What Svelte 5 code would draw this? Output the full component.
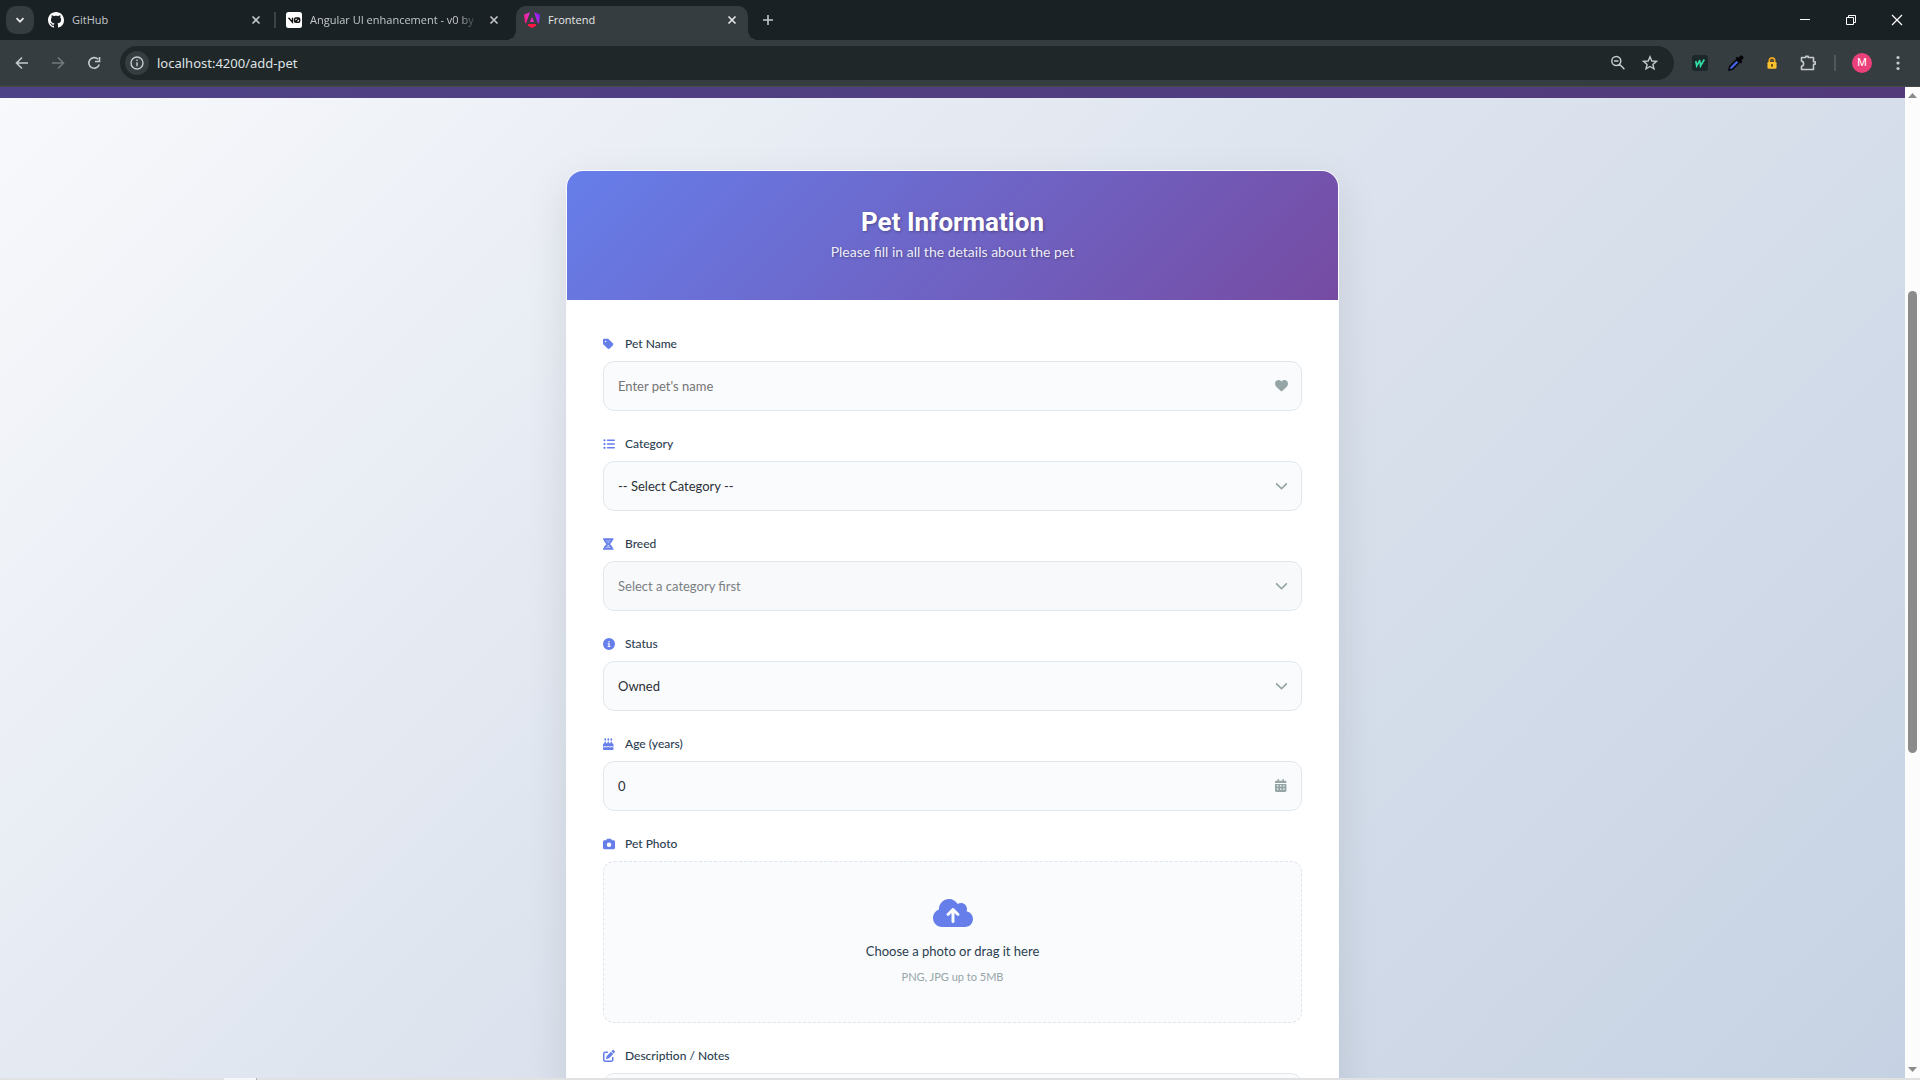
<script>
  let name = $state('');
  let category = $state('');
  let status = $state('owned');
  let age = $state(0);

  const icons = {
    tag: 'M0 80V229.5c0 17 6.700 33.300 18.700 45.300l176 176c25 25 65.500 25 90.500 0L418.700 317.300c25-25 25-65.500 0-90.500l-176-176c-12-12-28.300-18.700-45.300-18.700H48C21.500 32 0 53.500 0 80zm112 32a32 32 0 1 1 0 64 32 32 0 1 1 0-64z',
    list: 'M64 144a48 48 0 1 0 0-96 48 48 0 1 0 0 96zM192 64c-17.700 0-32 14.300-32 32s14.300 32 32 32H480c17.700 0 32-14.300 32-32s-14.300-32-32-32H192zm0 160c-17.700 0-32 14.300-32 32s14.300 32 32 32H480c17.700 0 32-14.300 32-32s-14.300-32-32-32H192zm0 160c-17.700 0-32 14.300-32 32s14.300 32 32 32H480c17.700 0 32-14.300 32-32s-14.300-32-32-32H192zM64 464a48 48 0 1 0 0-96 48 48 0 1 0 0 96zm48-208a48 48 0 1 0-96 0 48 48 0 1 0 96 0z',
    breed: 'M0 8h448v52h-24c-16 82-66 146-132 196 66 50 116 114 132 196h24v52H0v-52h24c16-82 66-146 132-196C90 206 40 142 24 60H0zM108 116l16 20h200l16-20zm68 72l48 36 48-36zm48 112l-72 48h144zM124 396l-16 20h232l-16-20z',
    info: 'M256 512A256 256 0 1 0 256 0a256 256 0 1 0 0 512zM216 336h24V272H216c-13.300 0-24-10.700-24-24s10.700-24 24-24h48c13.300 0 24 10.700 24 24v88h8c13.300 0 24 10.700 24 24s-10.700 24-24 24H216c-13.300 0-24-10.700-24-24s10.700-24 24-24zm40-208a32 32 0 1 1 0 64 32 32 0 1 1 0-64z',
    cake: 'M86.400 5.500L61.800 47.600C58 54.100 56 61.600 56 69.200V72c0 22.100 17.900 40 40 40s40-17.900 40-40V69.200c0-7.600-2-15-5.800-21.600L105.600 5.500C103.600 2.100 100 0 96 0s-7.600 2.100-9.600 5.500zm128 0L189.800 47.600c-3.800 6.500-5.800 14-5.800 21.600V72c0 22.100 17.900 40 40 40s40-17.900 40-40V69.200c0-7.600-2-15-5.800-21.600L233.600 5.500C231.600 2.100 228 0 224 0s-7.600 2.100-9.600 5.500zM317.800 47.600c-3.800 6.500-5.800 14-5.800 21.600V72c0 22.100 17.900 40 40 40s40-17.900 40-40V69.200c0-7.600-2-15-5.800-21.600L361.600 5.500C359.600 2.100 356 0 352 0s-7.600 2.100-9.600 5.500L317.800 47.600zM128 176c0-17.700-14.300-32-32-32s-32 14.300-32 32v48c-35.300 0-64 28.700-64 64v71c8.300 5.200 18.100 9 28.800 9 13.500 0 27.200-6.100 38.400-13.400 5.400-3.500 9.900-7.100 13-9.700 5.300-4.600 12.100-4.600 21.600 0 3.300 2.700 7.700 6.300 13.100 9.800C126.200 362 139.600 368 153 368s26.800-6 38.100-13.400c5.400-3.500 9.800-7.100 13-9.800 12.100-10.300 27.800-10.300 39.800 0 3.100 2.700 7.500 6.300 13 9.800C268.200 362 281.600 368 295 368s26.800-6 38.100-13.400c5.400-3.500 9.800-7.100 13-9.800 9.500-4.600 16.300-4.600 21.600 0 3.100 2.700 7.600 6.200 13 9.700 11.200 7.400 24.900 13.500 38.400 13.500 10.700 0 20.500-3.800 28.900-9V288c0-35.300-28.700-64-64-64V176c0-17.700-14.300-32-32-32s-32 14.300-32 32v48H256V176c0-17.700-14.300-32-32-32s-32 14.300-32 32v48H128V176zM448 394.600c-8.500 3.300-18.200 5.400-28.800 5.400-22.500 0-42.400-9.900-55.800-18.600-3-2-5.800-4-8.200-5.800-16 12-38.300 24.400-60.200 24.400s-44.200-12.400-60.200-24.400c-6.500-4.800-15.100-4.800-21.600 0C197.200 387.600 174.900 400 153 400s-44.200-12.400-60.200-24.400C78.500 386.900 55.300 400 28.800 400 18.200 400 8.500 397.900 0 394.600V480c0 17.700 14.300 32 32 32H416c17.700 0 32-14.300 32-32V394.600z',
    camera: 'M149.100 64.800L138.700 96H64C28.700 96 0 124.700 0 160V416c0 35.300 28.700 64 64 64H448c35.300 0 64-28.700 64-64V160c0-35.300-28.700-64-64-64H373.300L362.900 64.800C356.400 45.200 338.100 32 317.400 32H194.600c-20.700 0-39 13.200-45.500 32.800zM256 192a96 96 0 1 1 0 192 96 96 0 1 1 0-192z',
    edit: 'M471.600 21.400c-21.900-21.900-57.300-21.900-79.200 0L362.300 51.700l97.900 97.900 30.100-30.100c21.900-21.900 21.900-57.300 0-79.200L471.600 21.400zM172.400 241.700c-6.100 6.100-10.800 13.600-13.500 21.900l-29.600 88.800c-2.900 8.600-.600 18.100 5.800 24.600s15.900 8.700 24.600 5.800l88.800-29.600c8.200-2.700 15.700-7.400 21.900-13.500L437.700 172.300 339.700 74.300 172.400 241.700zM96 64C43 64 0 107 0 160V416c0 53 43 96 96 96H352c53 0 96-43 96-96V320c0-17.700-14.300-32-32-32s-32 14.300-32 32v96c0 17.700-14.300 32-32 32H96c-17.700 0-32-14.300-32-32V160c0-17.700 14.300-32 32-32h96c17.700 0 32-14.300 32-32s-14.300-32-32-32H96z',
    heart: 'M47.600 300.400L228.300 469.100c7.500 7 17.400 10.900 27.700 10.900s20.200-3.900 27.700-10.900L464.400 300.400c30.400-28.300 47.600-68 47.600-109.500v-5.800c0-69.900-50.500-129.500-119.400-141C347 36.500 300.600 51.400 268 84L256 96 244 84c-32.600-32.600-79-47.500-124.600-39.900C50.500 55.600 0 115.200 0 185.100v5.800c0 41.500 17.200 81.200 47.600 109.500z',
    chevron: 'M233.400 406.600c12.500 12.500 32.800 12.500 45.300 0l192-192c12.500-12.500 12.500-32.800 0-45.300s-32.800-12.500-45.300 0L256 338.700 86.600 169.400c-12.500-12.500-32.800-12.500-45.300 0s-12.500 32.800 0 45.300l192 192z',
    calendar: 'M128 0c17.700 0 32 14.300 32 32V64H288V32c0-17.700 14.300-32 32-32s32 14.300 32 32V64h48c26.500 0 48 21.500 48 48v48H0V112C0 85.500 21.500 64 48 64H96V32c0-17.700 14.300-32 32-32zM0 192H448V464c0 26.500-21.500 48-48 48H48c-26.500 0-48-21.500-48-48V192zm72 56v48h56v-48zm124 0v48h56v-48zm124 0v48h56v-48zM72 376v48h56v-48zm124 0v48h56v-48zm124 0v48h56v-48z',
    cloud: 'M144 480C64.500 480 0 415.500 0 336c0-62.800 40.200-116.200 96.200-135.900-.100-2.700-.200-5.400-.200-8.100 0-88.400 71.600-160 160-160 59.300 0 111 32.200 138.700 80.200C409.900 102 428.300 96 448 96c53 0 96 43 96 96 0 12.200-2.300 23.800-6.400 34.600C596 238.400 640 290.100 640 352c0 70.700-57.300 128-128 128H144zm79-217c-9.400 9.400-9.400 24.600 0 33.900s24.600 9.400 33.900 0l39-39V392c0 13.300 10.700 24 24 24s24-10.700 24-24V257.900l39 39c9.400 9.400 24.600 9.400 33.900 0s9.400-24.600 0-33.900l-80-80c-9.400-9.400-24.600-9.400-33.900 0l-80 80z',
  };
</script>

{#snippet icon(id, w, cls)}
  <svg class={cls} viewBox="0 0 {w} 512" preserveAspectRatio="xMinYMid meet" aria-hidden="true"><path fill="currentColor" fill-rule="evenodd" d={icons[id]} /></svg>
{/snippet}

{#snippet cross()}
  <svg width="16" height="16" viewBox="0 0 16 16" aria-hidden="true"><path d="M4.500 4.500l7 7m0-7l-7 7" fill="none" stroke="currentColor" stroke-width="1.600" /></svg>
{/snippet}

<div class="window">
  <header class="tabstrip">
    <button class="tab-search" aria-label="Search tabs">
      <svg width="14" height="14" viewBox="0 0 14 14"><path d="M3.500 5.200L7 8.700l3.500-3.500" fill="none" stroke="currentColor" stroke-width="1.800" /></svg>
    </button>
    <div class="tab">
      <svg class="favicon" viewBox="0 0 16 16" aria-hidden="true"><path fill="#fff" d="M8 0C3.580 0 0 3.580 0 8c0 3.540 2.290 6.530 5.470 7.590.4.070.55-.170.55-.380 0-.190-.010-.820-.010-1.490-2.010.370-2.530-.490-2.690-.940-.090-.230-.480-.940-.820-1.130-.280-.150-.680-.520-.010-.530.630-.010 1.080.580 1.230.820.720 1.210 1.870.870 2.330.660.070-.520.280-.870.510-1.070-1.780-.2-3.640-.890-3.640-3.950 0-.870.310-1.590.820-2.150-.080-.2-.360-1.020.080-2.120 0 0 .670-.210 2.200.820.640-.180 1.320-.270 2-.270s1.360.090 2 .270c1.530-1.040 2.200-.820 2.200-.820.440 1.100.160 1.920.080 2.120.510.560.820 1.270.820 2.150 0 3.070-1.870 3.750-3.650 3.950.290.250.540.730.540 1.480 0 1.070-.010 1.930-.010 2.200 0 .210.150.460.550.380A8.010 8.010 0 0 0 16 8c0-4.420-3.580-8-8-8z" /></svg>
      <span class="tab-title">GitHub</span>
      <button class="tab-close" aria-label="Close GitHub">{@render cross()}</button>
    </div>
    <span class="tab-divider"></span>
    <div class="tab">
      <svg class="favicon" viewBox="0 0 16 16" aria-hidden="true"><rect width="16" height="16" rx="2.500" fill="#fff" /><path d="M2.500 5.800l4 4.400V5.800M8.600 8.700V7.200q0-1.200 1.200-1.200h2.700q1.200 0 1.200 1.200v1.800q0 1.200-1.200 1.200H9.800q-1.200 0-1.200-1.200V8.700M9 9.900l4.300-3.700" fill="none" stroke="#111" stroke-width="1.400" /></svg>
      <span class="tab-title faded">Angular UI enhancement - v0 by</span>
      <button class="tab-close" aria-label="Close Angular UI enhancement">{@render cross()}</button>
    </div>
    <span class="tab-divider hidden"></span>
    <div class="tab active">
      <svg class="favicon" viewBox="0 0 16 16" aria-hidden="true">
        <defs><linearGradient id="ng" x1="0" y1="0.700" x2="1" y2="0.300"><stop offset="0" stop-color="#f0207c" /><stop offset="0.500" stop-color="#e02fd0" /><stop offset="1" stop-color="#7a1cff" /></linearGradient></defs>
        <path fill="url(#ng)" d="M0 2.500L6 .300 2 11.500 1 11zM16 2.500L10 .300l4 11.200 1-.5zM8 5l2.200 5H5.800z" />
        <path fill="#ff1744" d="M4.200 12h7.600l.7 1.600L8 16l-4.500-2.400z" />
      </svg>
      <span class="tab-title">Frontend</span>
      <button class="tab-close" aria-label="Close Frontend">{@render cross()}</button>
    </div>
    <button class="new-tab" aria-label="New tab">
      <svg width="14" height="14" viewBox="0 0 14 14"><path d="M7 2v10M2 7h10" fill="none" stroke="currentColor" stroke-width="1.600" /></svg>
    </button>
    <div class="window-controls">
      <button aria-label="Minimize"><svg width="12" height="12" viewBox="0 0 12 12"><path d="M1 5.500h10" stroke="currentColor" /></svg></button>
      <button aria-label="Restore"><svg width="12" height="12" viewBox="0 0 12 12"><path d="M1.500 3.500h7v7h-7zM3.500 3.500v-2h7v7h-2" fill="none" stroke="currentColor" /></svg></button>
      <button aria-label="Close window"><svg width="12" height="12" viewBox="0 0 12 12"><path d="M1 1l10 10M11 1L1 11" stroke="currentColor" stroke-width="1.200" /></svg></button>
    </div>
  </header>

  <nav class="toolbar" aria-label="Browser toolbar">
    <button class="tool" aria-label="Back"><svg width="16" height="16" viewBox="0 0 16 16"><path d="M14 8H3M8 2.500L2.500 8 8 13.500" fill="none" stroke="currentColor" stroke-width="1.600" /></svg></button>
    <button class="tool dim" aria-label="Forward" disabled><svg width="16" height="16" viewBox="0 0 16 16"><path d="M2 8h11M8 2.500L13.500 8 8 13.500" fill="none" stroke="currentColor" stroke-width="1.600" /></svg></button>
    <button class="tool" aria-label="Reload"><svg width="16" height="16" viewBox="0 0 16 16"><path d="M13.200 9.500A5.300 5.300 0 1 1 12 4.300M13.500 2v4.500H9" fill="none" stroke="currentColor" stroke-width="1.600" /></svg></button>
    <div class="omnibox">
      <button class="site-info" aria-label="Site information">
        <svg width="14" height="14" viewBox="0 0 14 14"><circle cx="7" cy="7" r="6" fill="none" stroke="currentColor" stroke-width="1.400" /><path d="M7 6.200v4M7 3.600v1.400" stroke="currentColor" stroke-width="1.400" /></svg>
      </button>
      <input class="url" type="text" value="localhost:4200/add-pet" aria-label="Address" />
      <button class="omni-action" aria-label="Zoom"><svg width="16" height="16" viewBox="0 0 16 16"><path d="M6.300 1.500a4.500 4.500 0 1 1 0 9 4.500 4.500 0 0 1 0-9zM9.600 9.300l4.800 4.900M4 6h4.500" fill="none" stroke="currentColor" stroke-width="1.500" /></svg></button>
      <button class="omni-action" aria-label="Bookmark"><svg width="16" height="16" viewBox="0 0 16 16"><path d="M8 1.800l1.800 4.200 4.600.4-3.500 3 1.100 4.500L8 11.500l-4 2.400 1.100-4.500-3.500-3 4.600-.4z" fill="none" stroke="currentColor" stroke-width="1.400" /></svg></button>
    </div>
    <button class="tool" aria-label="Check extension"><svg width="16" height="16" viewBox="0 0 16 16"><rect width="16" height="16" rx="3" fill="#1c282c" /><path d="M3.800 6l.900 5L8 5M8 6.500l.500 4.500L12.300 4.500" fill="none" stroke="#30e3a4" stroke-width="1.600" /></svg></button>
    <button class="tool" aria-label="Color picker"><svg width="16" height="16" viewBox="0 0 16 16"><path d="M1 15l.8-3.500 6.700-6.700 2.700 2.700-6.700 6.700z" fill="#4462de" stroke="#050810" stroke-width="1.500" /><path d="M7.500 3l1.700-1.300 1.300 1L12 1c1.800-1.600 4.600 1 3 2.900L13.300 5.500l1 1.300L13 8.500z" fill="#050507" /></svg></button>
    <button class="tool" aria-label="Lock extension"><svg width="14" height="14" viewBox="0 0 16 16"><path d="M4.800 7V5.300a3.200 3.200 0 0 1 6.400 0V7" fill="#5d4a3a" stroke="#e8a71c" stroke-width="1.800" /><rect x="2.800" y="6.800" width="10.400" height="7.700" rx="1.500" fill="#fbc02d" /><path d="M8 9v3.200" stroke="#4d3b0c" stroke-width="1.800" /></svg></button>
    <button class="tool" aria-label="Extensions"><svg width="18" height="18" viewBox="0 0 18 18"><path d="M2.500 3.500h4.300V2.300h2.400v1.200h5.300v4.200h1.700v2.600h-1.700v5.200h-12v-3.200c2.800-.5 2.800-4.700 0-5.200z" fill="none" stroke="currentColor" stroke-width="1.600" stroke-linejoin="round" /></svg></button>
    <span class="tool-divider"></span>
    <button class="avatar" aria-label="Profile">M</button>
    <button class="tool" aria-label="Menu"><svg width="16" height="16" viewBox="0 0 16 16" fill="currentColor"><circle cx="8" cy="2.500" r="1.600" /><circle cx="8" cy="8" r="1.600" /><circle cx="8" cy="13.500" r="1.600" /></svg></button>
  </nav>

  <div class="viewport">
    <main class="page">
      <div class="hero-edge"></div>
      <form class="card">
        <div class="card-header">
          <h2>Pet Information</h2>
          <p>Please fill in all the details about the pet</p>
        </div>
        <div class="card-body">
          <div class="field">
            <label for="pet-name">{@render icon('tag', 448, 'label-icon')}Pet Name</label>
            <div class="control">
              <input id="pet-name" type="text" placeholder="Enter pet's name" bind:value={name} />
              {@render icon('heart', 512, 'control-icon')}
            </div>
          </div>
          <div class="field">
            <label for="category">{@render icon('list', 512, 'label-icon')}Category</label>
            <div class="control">
              <select id="category" bind:value={category}><option value="">-- Select Category --</option><option>Dog</option><option>Cat</option></select>
              {@render icon('chevron', 512, 'control-icon')}
            </div>
          </div>
          <div class="field">
            <label for="breed">{@render icon('breed', 448, 'label-icon')}Breed</label>
            <div class="control">
              <select id="breed" disabled><option>Select a category first</option></select>
              {@render icon('chevron', 512, 'control-icon')}
            </div>
          </div>
          <div class="field">
            <label for="status">{@render icon('info', 512, 'label-icon')}Status</label>
            <div class="control">
              <select id="status" bind:value={status}><option value="owned">Owned</option><option value="adoption">For adoption</option></select>
              {@render icon('chevron', 512, 'control-icon')}
            </div>
          </div>
          <div class="field">
            <label for="age">{@render icon('cake', 448, 'label-icon')}Age (years)</label>
            <div class="control">
              <input id="age" class="number" type="number" min="0" bind:value={age} />
              {@render icon('calendar', 448, 'control-icon')}
            </div>
          </div>
          <div class="field">
            <label for="photo">{@render icon('camera', 512, 'label-icon')}Pet Photo</label>
            <label class="dropzone" for="photo">
              {@render icon('cloud', 640, 'cloud')}
              <span class="drop-title">Choose a photo or drag it here</span>
              <span class="drop-hint">PNG, JPG up to 5MB</span>
            </label>
            <input id="photo" type="file" accept="image/png,image/jpeg" hidden />
          </div>
          <div class="field">
            <label for="notes">{@render icon('edit', 512, 'label-icon')}Description / Notes</label>
            <textarea id="notes" rows="4"></textarea>
          </div>
        </div>
      </form>
    </main>
    <div class="scrollbar" aria-hidden="true">
      <svg width="9" height="5" viewBox="0 0 9 5"><path d="M4.500 0L9 5H0z" fill="#8b8b8b" /></svg>
      <div class="track"><div class="thumb"></div></div>
      <svg width="9" height="5" viewBox="0 0 9 5"><path d="M4.500 5L9 0H0z" fill="#8b8b8b" /></svg>
    </div>
  </div>
  <div class="taskbar"><span></span></div>
</div>

<style>
  :global(body) { margin: 0; }
  *, *::before, *::after { box-sizing: border-box; }
  button { border: 0; padding: 0; background: none; color: inherit; font: inherit; display: grid; place-items: center; flex: none; }
  svg { display: block; flex: none; }

  .window { height: 100vh; display: flex; flex-direction: column; overflow: hidden; font-family: "Open Sans", "Noto Sans", sans-serif; background: #363d40; }

  .tabstrip { flex: none; height: 40px; display: flex; align-items: flex-start; padding: 6px 0 0 6px; background: #1a2124; color: #c4c8ca; }
  .tab-search { width: 28px; height: 28px; border-radius: 10px; background: #363d40; color: #e3e6e7; margin-right: 6px; }
  .tab { position: relative; flex: 0 1 232px; min-width: 0; height: 34px; padding: 0 8px 6px; display: flex; align-items: center; gap: 8px; font-size: 11px; }
  .favicon { width: 16px; height: 16px; }
  .tab-title { flex: 1; min-width: 0; white-space: nowrap; overflow: hidden; line-height: 20px; }
  .faded { mask-image: linear-gradient(90deg, #000 88%, transparent); }
  .tab-close { width: 16px; height: 16px; }
  .tab-divider { flex: none; width: 2px; height: 16px; margin: 6px 2px 0; background: #3b4346; }
  .hidden { visibility: hidden; }
  .active { background: #363d40; color: #e6e8e9; border-radius: 10px 10px 0 0; }
  .active::before, .active::after { content: ""; position: absolute; bottom: 0; width: 10px; height: 10px; }
  .active::before { right: 100%; background: radial-gradient(circle at 0 0, transparent 10px, #363d40 10px); }
  .active::after { left: 100%; background: radial-gradient(circle at 100% 0, transparent 10px, #363d40 10px); }
  .new-tab { width: 28px; height: 28px; margin-left: 6px; }
  .window-controls { display: flex; margin-left: auto; color: #fff; }
  .window-controls button { width: 46px; height: 28px; }

  .toolbar { flex: none; height: 47px; display: flex; align-items: center; padding: 0 4px 1px; background: #363d40; color: #c5cacc; border-bottom: 1px solid #474b48; }
  .tool { width: 36px; height: 34px; }
  .dim { color: #737a7d; }
  .omnibox { flex: 1; min-width: 0; height: 34px; margin: 0 8px; padding: 0 8px 0 5px; display: flex; align-items: center; border-radius: 17px; background: #1f2729; }
  .site-info { width: 24px; height: 24px; border-radius: 50%; background: #363d40; }
  .url { flex: 1; min-width: 0; margin-left: 8px; padding: 0; border: 0; outline: 0; background: none; color: #dfe3e5; font-family: "Noto Sans", sans-serif; font-size: 13px; line-height: 20px; }
  .omni-action { width: 32px; height: 32px; }
  .tool-divider { width: 2px; height: 16px; margin: 0 16px 0 8px; background: #50585b; }
  .avatar { width: 20px; height: 20px; margin-right: 8px; border-radius: 50%; background: #ec407a; color: #fff; font-family: Roboto, sans-serif; font-size: 11px; }

  .viewport { flex: 1; min-height: 0; display: flex; }
  .page { flex: 1; min-width: 0; overflow: hidden; display: flex; flex-direction: column; align-items: center; background: linear-gradient(135deg, #f8f9fc, #dfe5ef 45%, #c6d2e3); font-family: Lato, "Open Sans", sans-serif; }
  .hero-edge { flex: none; align-self: stretch; height: 11px; background: linear-gradient(90deg, #4e4286, #523a7a); }
  .card { flex: none; width: calc(100% - 48px); max-width: 773px; margin: 72px 0; border: 1px solid #fbfcfe; border-radius: 17px; overflow: hidden; background: #fff; box-shadow: 0 14px 42px rgba(0, 0, 0, 0.1); }
  .card-header { padding: 35px 36px 38px; text-align: center; color: #fff; background: linear-gradient(135deg, #667eea, #764ba2); text-shadow: 1px 1px 3px rgba(0, 0, 0, 0.3); }
  h2 { margin: 0 0 3px; font-family: Roboto, sans-serif; font-size: 26px; line-height: 32px; font-weight: 700; }
  .card-header p { margin: 0; font-size: 14px; line-height: 21px; color: rgba(255, 255, 255, 0.9); }

  .card-body { padding: 35px 36px; }
  .field { margin-bottom: 24px; }
  .field > label:first-child { display: flex; align-items: center; gap: 10px; margin-bottom: 8px; font-size: 12px; line-height: 18px; font-weight: 500; color: #2c3e50; }
  .label-icon { width: 12px; height: 12px; color: #667eea; }
  .control { position: relative; }
  .control input, select, textarea { display: block; width: 100%; height: 50px; padding: 0 14px; border: 1px solid #e1e8ed; border-radius: 11px; background: #fafbfd; color: #2b3036; font-family: inherit; font-size: 13px; line-height: 20px; appearance: none; outline: 0; }
  textarea { height: 100px; padding: 14px; resize: none; }
  .control input::placeholder { color: #757575; opacity: 1; }
  select:disabled { background: #f8f9fa; color: #7b8085; opacity: 1; }
  .number { appearance: textfield; color: #111; }
  .number::-webkit-inner-spin-button { appearance: none; }
  .control-icon { position: absolute; top: 18px; right: 14px; width: 13px; height: 13px; color: #95a5a6; pointer-events: none; }

  .dropzone { display: flex; flex-direction: column; align-items: center; padding: 35px 36px 36px; border: 1px dashed #dfe5ea; border-radius: 11px; background: #fafbfd; }
  .cloud { width: 40px; height: 32px; margin-bottom: 13px; color: #667eea; }
  .drop-title { font-size: 13px; line-height: 18px; color: #2c3e50; }
  .drop-hint { margin-top: 8px; font-size: 11px; line-height: 18px; color: #95a5a6; }

  .scrollbar { flex: none; width: 15px; padding: 6px 0; display: flex; flex-direction: column; align-items: center; background: #fcfcfc; }
  .track { flex: 1; width: 9px; padding: 193px 0 0; }
  .thumb { height: 59.5%; border-radius: 5px; background: #8b8b8b; }

  .taskbar { flex: none; height: 2px; padding-left: 224px; background: #dfe1e2; }
  .taskbar span { display: block; width: 33px; height: 2px; background: #f6f7f8; border-right: 1px solid #b0b2b4; }
</style>
